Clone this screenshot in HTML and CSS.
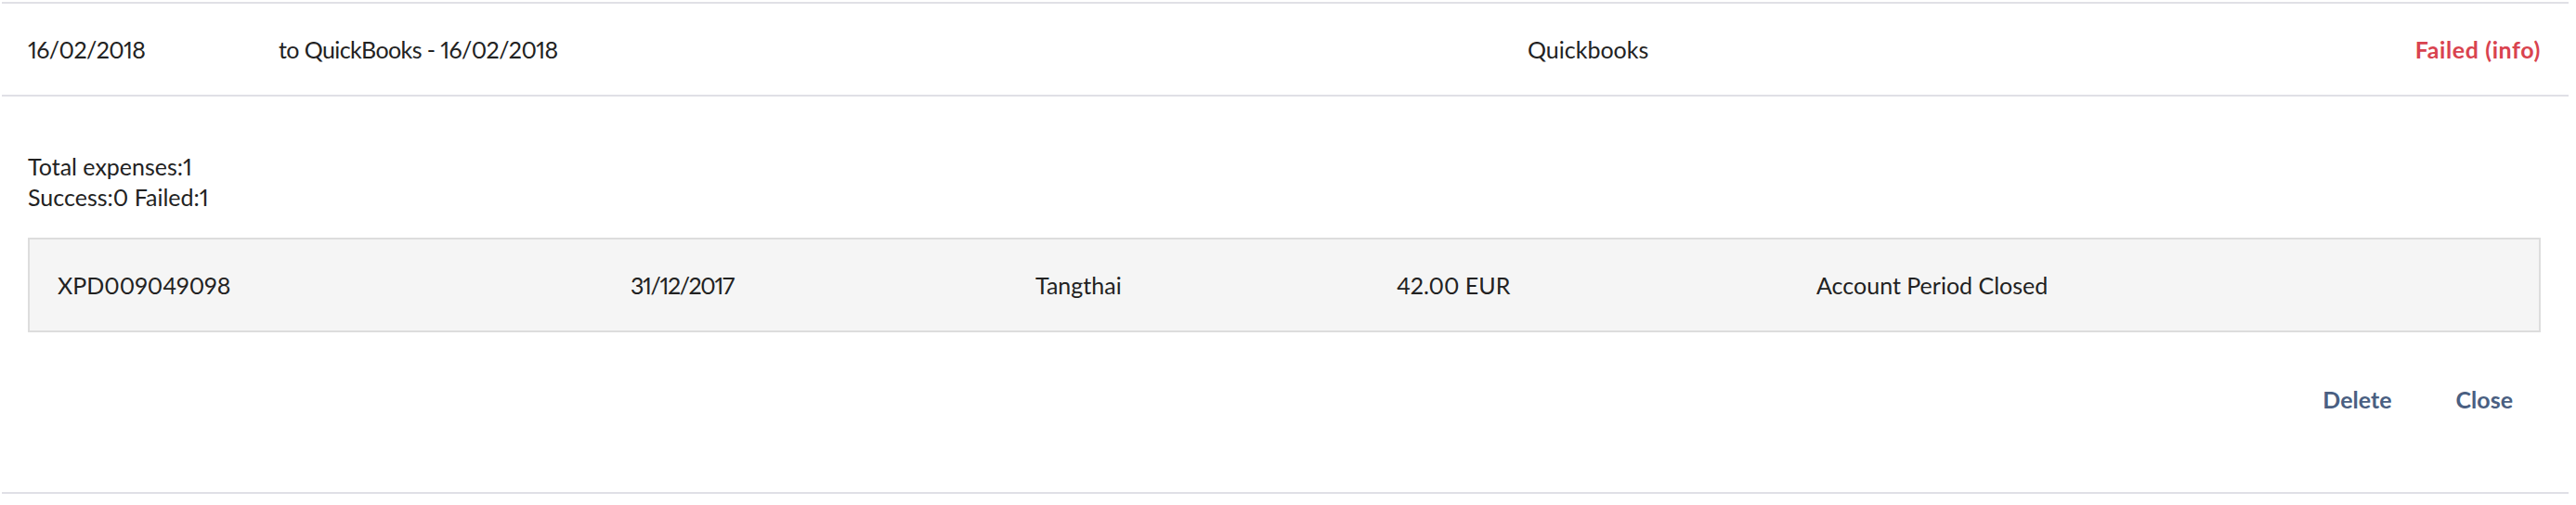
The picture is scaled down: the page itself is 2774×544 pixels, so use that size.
FILE: index.html
```html
<!DOCTYPE html>
<html lang="en">
<head>
<meta charset="utf-8">
<title>Export log</title>
<link rel="stylesheet" href="styles.css">
</head>
<body>
<div class="panel">
  <div class="head">
    <div class="cell date">16/02/2018</div>
    <div class="cell date">to QuickBooks - 16/02/2018</div>
    <div class="cell">Quickbooks</div>
    <div class="cell status">Failed (info)</div>
  </div>
  <div class="detail">
    <div class="summary">
      <div>Total expenses:1</div>
      <div>Success:0 Failed:1</div>
    </div>
    <div class="items">
      <div class="item">
        <div>XPD009049098</div>
        <div class="date tight">31/12/2017</div>
        <div>Tangthai</div>
        <div>42.00 EUR</div>
        <div>Account Period Closed</div>
      </div>
    </div>
    <div class="actions">
      <a class="action" href="#">Delete</a>
      <a class="action" href="#">Close</a>
    </div>
  </div>
</div>
</body>
</html>
```

FILE: styles.css
```css
html, body {
  margin: 0;
  padding: 0;
  background: #ffffff;
}

body {
  font-family: "Lato", "Open Sans", sans-serif;
  font-size: 25px;
  line-height: 33px;
  color: #222222;
  font-variant-numeric: proportional-nums;
  font-feature-settings: "pnum" 1;
}

.panel {
  margin: 2px 8px 0 2px;
  border-top: 2px solid #e0e0e6;
  border-bottom: 2px solid #e0e0e6;
}

.head {
  display: grid;
  grid-template-columns: 270px 1345px 1fr auto;
  align-items: center;
  height: 98px;
  padding: 0 30px 0 28px;
  border-bottom: 2px solid #e0e0e6;
}

.date {
  letter-spacing: -0.6px;
}

.date.tight {
  letter-spacing: -1.4px;
}

.status {
  color: #d9434f;
  font-weight: 700;
  letter-spacing: 0.6px;
}

.detail {
  padding: 59px 30px 83px 28px;
}

.items {
  margin-top: 27px;
  background: #f5f5f5;
  border: 2px solid #dddddd;
}

.item {
  display: grid;
  grid-template-columns: 617px 436px 389px 452px 1fr;
  align-items: center;
  height: 98px;
  padding: 0 30px;
}

.actions {
  display: flex;
  justify-content: flex-end;
  gap: 69px;
  margin-top: 56px;
  padding-right: 30px;
}

.action {
  color: #4a5f82;
  font-weight: 700;
  text-decoration: none;
}
```
